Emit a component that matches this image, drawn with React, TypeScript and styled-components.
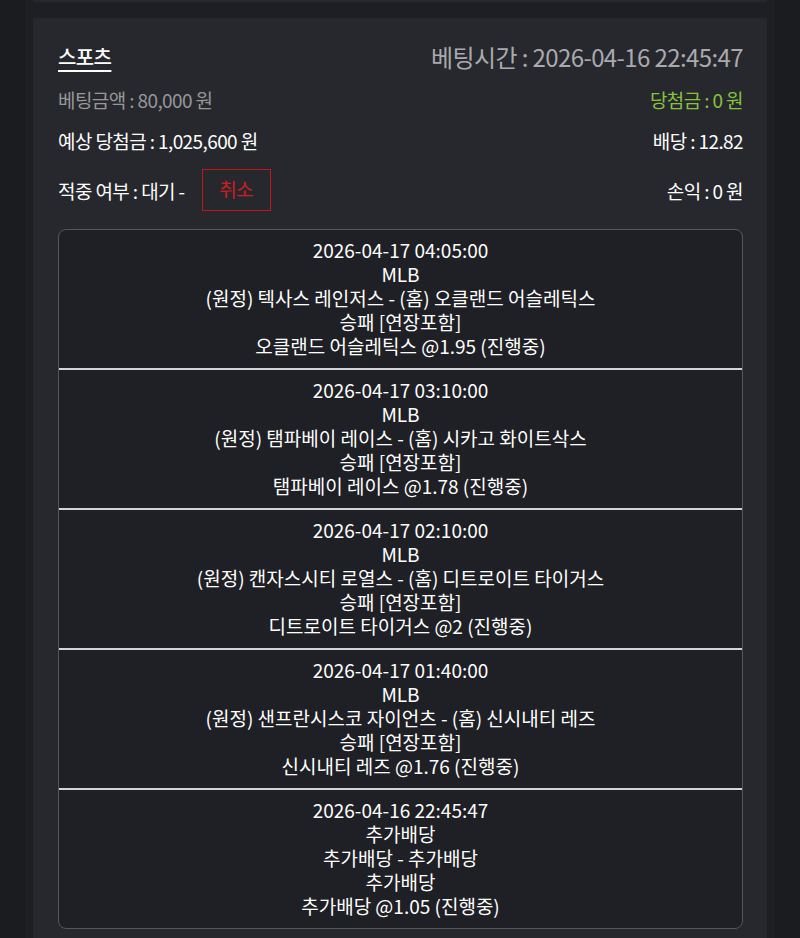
import React from 'react';
import styled, { createGlobalStyle } from 'styled-components';

interface IPick {
  time: string;
  league: string;
  match: string;
  market: string;
  pick: string;
}

const picks: IPick[] = [
  {
    time: '2026-04-17 04:05:00',
    league: 'MLB',
    match: '(원정) 텍사스 레인저스 - (홈) 오클랜드 어슬레틱스',
    market: '승패 [연장포함]',
    pick: '오클랜드 어슬레틱스 @1.95 (진행중)',
  },
  {
    time: '2026-04-17 03:10:00',
    league: 'MLB',
    match: '(원정) 탬파베이 레이스 - (홈) 시카고 화이트삭스',
    market: '승패 [연장포함]',
    pick: '탬파베이 레이스 @1.78 (진행중)',
  },
  {
    time: '2026-04-17 02:10:00',
    league: 'MLB',
    match: '(원정) 캔자스시티 로열스 - (홈) 디트로이트 타이거스',
    market: '승패 [연장포함]',
    pick: '디트로이트 타이거스 @2 (진행중)',
  },
  {
    time: '2026-04-17 01:40:00',
    league: 'MLB',
    match: '(원정) 샌프란시스코 자이언츠 - (홈) 신시내티 레즈',
    market: '승패 [연장포함]',
    pick: '신시내티 레즈 @1.76 (진행중)',
  },
  {
    time: '2026-04-16 22:45:47',
    league: '추가배당',
    match: '추가배당 - 추가배당',
    market: '추가배당',
    pick: '추가배당 @1.05 (진행중)',
  },
];

const GlobalStyle = createGlobalStyle`
  html, body {
    margin: 0;
    padding: 0;
    background: #1b1c20;
  }
  body {
    font-family: 'Noto Sans CJK KR', 'Noto Sans', sans-serif;
    color: #fff;
  }
`;

const Page = styled.div`
  width: 750px;
  margin: 0 auto;
  min-height: 938px;
  background: #1e1f23;
  padding: 0 8px;
  box-sizing: border-box;
  display: flex;
  flex-direction: column;
  gap: 16px;
`;

const PrevCard = styled.div`
  height: 2px;
  background: #27282d;
`;

const Card = styled.div`
  background: #27282d;
  padding: 24px 24px 24px 25px;
  letter-spacing: -0.6px;
`;

const Row = styled.div<{ $h: number; $gap: number }>`
  display: flex;
  justify-content: space-between;
  align-items: center;
  height: ${({ $h }) => $h}px;
  margin-top: ${({ $gap }) => $gap}px;
`;

const Title = styled.span`
  font-size: 20px;
  color: #fff;
  text-decoration: underline;
  text-underline-offset: 5px;
  font-weight: 500;
`;

const Text = styled.span<{ $color?: string; $size?: number }>`
  font-size: ${({ $size }) => $size ?? 19}px;
  color: ${({ $color }) => $color ?? '#fff'};
  display: flex;
  align-items: center;
  white-space: nowrap;
`;

const CancelButton = styled.button`
  margin-left: 17px;
  width: 69px;
  height: 42px;
  border: 1.5px solid #c1161d;
  background: transparent;
  color: #d31c22;
  font-family: inherit;
  font-size: 19px;
  letter-spacing: -0.6px;
  padding: 0 0 4px;
`;

const PickList = styled.div`
  margin-top: 18px;
  border: 1.5px solid #55565b;
  border-radius: 8px;
  background: #1f2025;
  overflow: hidden;
`;

const PickItem = styled.div`
  padding: 8px 0 10px;
  text-align: center;
  font-size: 19px;
  letter-spacing: 0;
  line-height: 24px;
  color: #fff;
  & + & {
    border-top: 2px solid #d4d4d6;
  }
`;

const App: React.FC = () => (
  <>
    <GlobalStyle />
    <Page>
      <PrevCard />
      <Card>
        <Row $h={28} $gap={0}>
          <Title>스포츠</Title>
          <Text $color="#a9aaad" $size={24}>
            베팅시간 : 2026-04-16 22:45:47
          </Text>
        </Row>
        <Row $h={28} $gap={15}>
          <Text $color="#96979b">베팅금액 : 80,000 원</Text>
          <Text $color="#86c23e">당첨금 : 0 원</Text>
        </Row>
        <Row $h={28} $gap={13}>
          <Text>예상 당첨금 : 1,025,600 원</Text>
          <Text>배당 : 12.82</Text>
        </Row>
        <Row $h={42} $gap={15}>
          <Text>
            적중 여부 : 대기 -<CancelButton>취소</CancelButton>
          </Text>
          <Text>손익 : 0 원</Text>
        </Row>
        <PickList>
          {picks.map((p) => (
            <PickItem key={p.time}>
              <div>{p.time}</div>
              <div>{p.league}</div>
              <div>{p.match}</div>
              <div>{p.market}</div>
              <div>{p.pick}</div>
            </PickItem>
          ))}
        </PickList>
      </Card>
    </Page>
  </>
);

export default App;
